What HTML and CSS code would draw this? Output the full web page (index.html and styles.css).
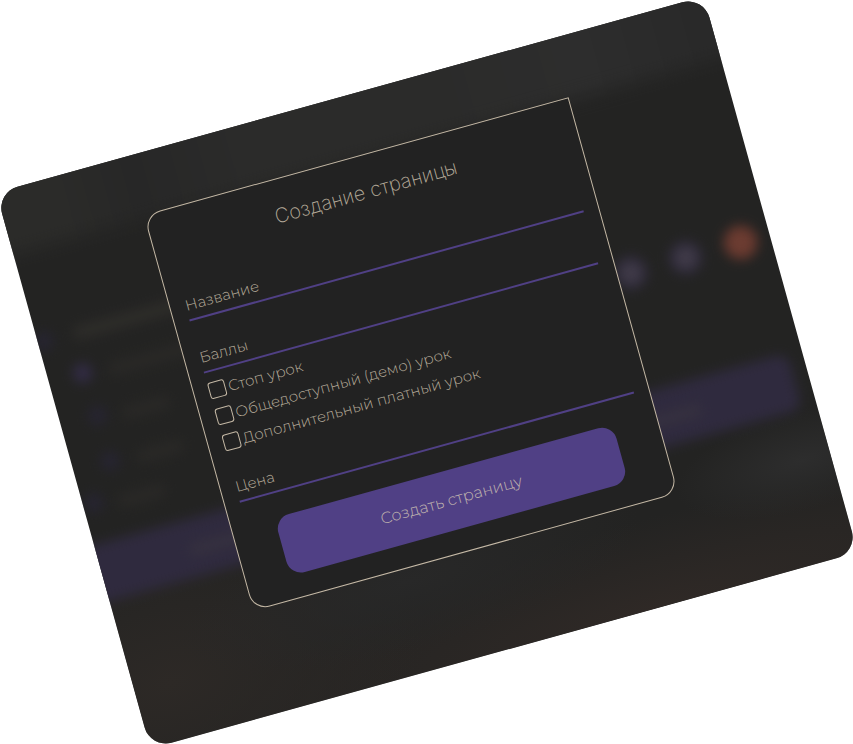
FILE: index.html
```
<!DOCTYPE html>
<html lang="ru">
<head>
<meta charset="utf-8">
<title>Создание страницы</title>
<link rel="stylesheet" href="styles.css">
</head>
<body>
<main class="panel">
  <div class="backdrop" aria-hidden="true">
    <div class="header-glow"></div>
    <div class="band"></div>
    <i class="smudge band-left"></i>
    <i class="smudge band-right"></i>
    <i class="dot tool-one"></i>
    <i class="dot tool-two"></i>
    <i class="dot tool-danger"></i>
    <i class="dot faint node-one"></i>
    <i class="dot faint node-two"></i>
    <i class="dot faint node-three"></i>
    <i class="dot faint node-four"></i>
    <i class="dot faint node-five"></i>
    <i class="smudge row-one"></i>
    <i class="smudge row-two"></i>
    <i class="smudge row-three"></i>
    <i class="smudge row-four"></i>
    <i class="smudge row-five"></i>
  </div>
  <form class="dialog">
    <h1 class="title">Создание страницы</h1>
    <div class="field">
      <label class="label" for="name">Название</label>
      <input class="input" id="name" type="text">
    </div>
    <div class="field">
      <label class="label" for="points">Баллы</label>
      <input class="input" id="points" type="text">
    </div>
    <div class="options">
      <label class="option"><input class="check" type="checkbox"><span>Стоп урок</span></label>
      <label class="option"><input class="check" type="checkbox"><span>Общедоступный (демо) урок</span></label>
      <label class="option"><input class="check" type="checkbox"><span>Дополнительный платный урок</span></label>
    </div>
    <div class="field price">
      <label class="label" for="price">Цена</label>
      <input class="input" id="price" type="text">
    </div>
    <button class="submit" type="button">Создать страницу</button>
  </form>
</main>
</body>
</html>
```
FILE: styles.css
```
* { box-sizing: border-box; }

body {
  margin: 0;
  min-height: 100vh;
  display: grid;
  grid-template-columns: minmax(0, 734px);
  place-content: center;
  overflow: hidden;
  background: #fff;
  color: #b5aa99;
  font: 300 15px/20px Montserrat, Inter, sans-serif;
}

.panel {
  position: relative;
  padding: 61px 157px 105px 136px;
  border-radius: 22px;
  overflow: hidden;
  background: #232322;
  transform: rotate(-15.5deg);
}

.backdrop {
  position: absolute;
  inset: 0;
  background:
    radial-gradient(ellipse 130px 50px at 96% 82%, #2d2d2d, transparent),
    radial-gradient(ellipse 240px 70px at 40% 84%, #282828, transparent),
    radial-gradient(ellipse 260px 150px at 5% 90%, #2d2926, transparent),
    radial-gradient(ellipse 480px 90px at 72% 100%, #2f2926, transparent);
}

.backdrop > * { position: absolute; }

.header-glow {
  inset: -20px -20px auto;
  height: 84px;
  background: linear-gradient(90deg, #2b2b29 10%, #272727 20%, #2b2b2a 35%, #2b2b2a 60%, #2d2d2d 80%, #282828);
  filter: blur(9px);
}

.band {
  left: -20px;
  right: 15px;
  top: 366px;
  height: 58px;
  border-radius: 12px;
  background: #2f2a3e;
  filter: blur(6px);
}

.dot {
  width: 34px;
  height: 34px;
  border-radius: 50%;
  background: radial-gradient(#4a4450, #292536 75%);
  filter: blur(6px);
}

.tool-one { left: 573px; top: 230px; }
.tool-two { left: 630px; top: 230px; }
.tool-danger { left: 687px; top: 230px; background: radial-gradient(#6e3f34, #65342a); }

.faint {
  width: 20px;
  height: 20px;
  background: #262430;
}

.node-one { left: -4px; top: 146px; }
.node-two { left: 25px; top: 187px; background: #312b43; }
.node-three { left: 28px; top: 232px; }
.node-four { left: 28px; top: 279px; }
.node-five { left: 1px; top: 315px; }

.smudge {
  height: 14px;
  border-radius: 7px;
  background: #292826;
  filter: blur(6px);
}

.row-one { left: 36px; top: 150px; width: 120px; background: #2d2c29; }
.row-two { left: 60px; top: 194px; width: 90px; }
.row-three { left: 62px; top: 240px; width: 50px; }
.row-four { left: 64px; top: 286px; width: 50px; }
.row-five { left: 34px; top: 324px; width: 50px; }
.band-left { left: 90px; top: 390px; width: 80px; background: #35303f; }
.band-right { left: 550px; top: 390px; width: 72px; background: #35303f; }

.dialog {
  position: relative;
  display: flex;
  flex-direction: column;
  padding: 21px 15px 23px;
  border: 1px solid #c4b8a5;
  border-radius: 17px 0 17px 17px;
  background: #222;
}

.title {
  margin: 0 0 9px;
  text-align: center;
  font: 200 20px/30px Inter, sans-serif;
}

.field {
  display: grid;
  margin-top: 28px;
}

.field > * { grid-area: 1 / 1; }

.input {
  width: 100%;
  height: 26px;
  padding: 0;
  border: 0;
  border-bottom: 2px solid #504085;
  outline: 0;
  background: transparent;
  color: inherit;
  font: inherit;
}

.options { margin-top: 5px; }

.option {
  display: flex;
  align-items: center;
  gap: 3px;
  height: 27px;
}

.check {
  appearance: none;
  width: 17px;
  height: 17px;
  margin: 0;
  border: 1px solid #c4b8a5;
  border-radius: 3px;
}

.price { margin-top: 22px; }

.submit {
  align-self: center;
  width: 86%;
  margin-top: 24px;
  padding: 18px;
  border: 0;
  border-radius: 15px;
  background: #504085;
  color: #bfb2ae;
  font: 300 16px/24px Montserrat, Inter, sans-serif;
}
```
